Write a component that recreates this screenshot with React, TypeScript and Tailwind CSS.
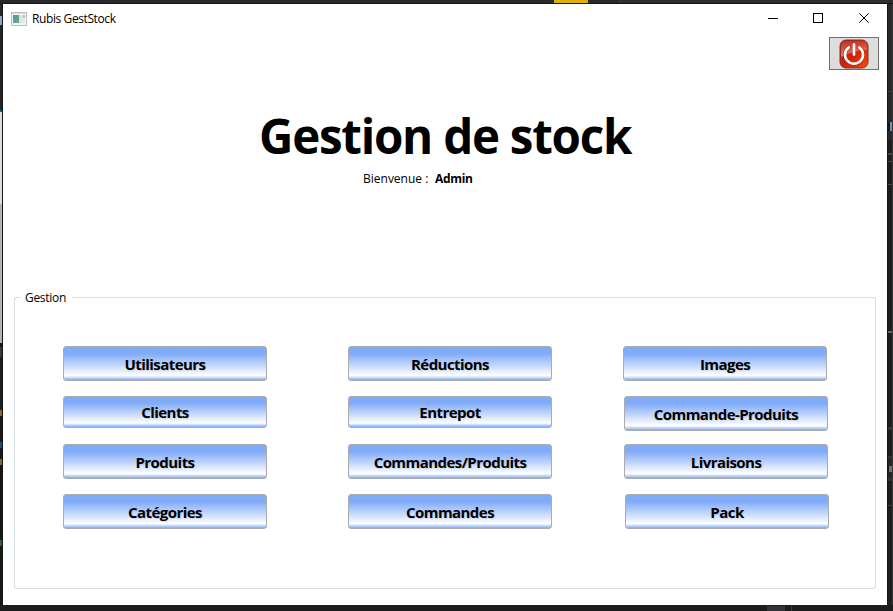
import React from "react";

type Mark = { h: number; c: string; x?: number };

const leftMarks: Mark[] = [
  { h: 12, c: "#28282a" },
  { h: 9, c: "#8fa3c8" },
  { h: 85, c: "#252526" },
  { h: 2, c: "#0a639c" },
  { h: 92, c: "#dedede" },
  { h: 139, c: "#b4b4b4" },
  { h: 4, c: "#151515" },
  { h: 10, c: "#3a3a3c" },
  { h: 53, c: "#1e1e1e" },
  { h: 6, c: "#8a6435" },
  { h: 26, c: "#1a1a1a" },
  { h: 6, c: "#234689" },
  { h: 11, c: "#1a1a1a" },
  { h: 6, c: "#8a6435" },
  { h: 75, c: "#171717" },
  { h: 6, c: "#2f632f" },
  { h: 59, c: "#181818" },
];

const rightMarks: Mark[] = [
  { h: 87, c: "#29292c" },
  { h: 1, c: "#3f3f44" },
  { h: 30, c: "#29292c" },
  { h: 9, c: "#5d9cc0", x: 2 },
  { h: 9, c: "#29292c" },
  { h: 13, c: "#1e1e1e" },
  { h: 2, c: "#5a4022" },
  { h: 6, c: "#1e1e1e" },
  { h: 1, c: "#4a4a4c" },
  { h: 22, c: "#1e1e1e" },
  { h: 1, c: "#4a4a4c" },
  { h: 146, c: "#1e1e1e" },
  { h: 2, c: "#6c6865" },
  { h: 94, c: "#1e1e1e" },
  { h: 3, c: "#333337" },
  { h: 26, c: "#1e1e1e" },
  { h: 3, c: "#333337" },
  { h: 7, c: "#252528" },
  { h: 6, c: "#77706c", x: 1 },
  { h: 5, c: "#252528" },
  { h: 4, c: "#333337" },
  { h: 24, c: "#1e1e1e" },
  { h: 1, c: "#3a3a3c" },
  { h: 99, c: "#1f1f20" },
];

function Strip({ marks, className }: { marks: Mark[]; className: string }) {
  return (
    <div className={`flex flex-col overflow-hidden ${className}`}>
      {marks.map((m, i) => (
        <div key={i} className="shrink-0" style={{ height: m.h, marginLeft: m.x ?? 0, backgroundColor: m.c }} />
      ))}
    </div>
  );
}

function MenuButton({ label, className = "h-[35px] pt-px" }: { label: string; className?: string }) {
  return (
    <button
      className={`flex w-[204px] shrink-0 items-center justify-center rounded-[3px] border border-[#a9abad] bg-[linear-gradient(to_bottom,#80abf8_0%,#80abf8_20%,#ffffff_87%,#80abf8_100%)] text-[15px] leading-5 font-bold tracking-[-0.55px] whitespace-nowrap text-black [text-shadow:1px_1px_1px_#00000018] ${className}`}
    >
      {label}
    </button>
  );
}

function AppIcon() {
  return (
    <svg width="16" height="14" viewBox="0 0 16 14" shapeRendering="crispEdges">
      <defs>
        <linearGradient id="pane" x1="0" y1="0" x2="1" y2="1">
          <stop offset="0" stopColor="#5b8ec0" />
          <stop offset="1" stopColor="#5fae78" />
        </linearGradient>
      </defs>
      <rect width="16" height="14" fill="#b9bec3" />
      <rect x="1" y="1" width="14" height="12" fill="#f1f3f5" />
      <rect x="1" y="1" width="14" height="1" fill="#d8dde2" />
      <rect x="2" y="3" width="6" height="8" fill="url(#pane)" />
      <rect x="8" y="3" width="4" height="8" fill="#dfe1e3" />
      <rect x="12" y="3" width="2" height="3" fill="#a9c9bb" />
      <rect x="12" y="6" width="2" height="5" fill="#e9eaeb" />
    </svg>
  );
}

function PowerIcon() {
  return (
    <svg width="30" height="30" viewBox="0 0 30 30">
      <defs>
        <linearGradient id="red" x1="0" y1="0" x2="1" y2="1">
          <stop offset="0" stopColor="#c01208" />
          <stop offset="0.5" stopColor="#d42005" />
          <stop offset="1" stopColor="#f65008" />
        </linearGradient>
        <linearGradient id="shine" x1="0" y1="0" x2="0" y2="1">
          <stop offset="0" stopColor="#fff" stopOpacity="0.1" />
          <stop offset="1" stopColor="#fff" stopOpacity="0.42" />
        </linearGradient>
      </defs>
      <rect x="1" y="1" width="28" height="28" rx="6" fill="url(#red)" stroke="#6b3a36" strokeWidth="1" />
      <path d="M2 7 Q2 2 7 2 H23 Q28 2 28 7 V11 Q16 11 2 18 Z" fill="url(#shine)" />
      <path d="M9.8 8.4 A9 9 0 1 0 20.2 8.4" fill="none" stroke="#7d1408" strokeOpacity="0.5" strokeWidth="3.8" strokeLinecap="round" />
      <path d="M15 5.5 V15.5" stroke="#7d1408" strokeOpacity="0.5" strokeWidth="4" strokeLinecap="round" />
      <path d="M9.8 8.4 A9 9 0 1 0 20.2 8.4" fill="none" stroke="#fff" strokeWidth="2.6" strokeLinecap="round" />
      <path d="M15 5.5 V15.5" stroke="#fff" strokeWidth="2.8" strokeLinecap="round" />
    </svg>
  );
}

export default function App() {
  return (
    <div className="flex h-[611px] w-[893px] flex-col overflow-hidden bg-[#1a1a1a] font-['Open_Sans','Noto_Sans',sans-serif] text-black">
      <div className="flex h-1 shrink-0 border-b border-[#151516] bg-[#29292b]">
        <div className="ml-[554px] w-[34px] bg-[#e0b000]" />
        <div className="ml-8 w-px bg-[#3c3c40]" />
        <div className="flex-1 bg-[#2d2d30]" />
      </div>
      <div className="flex h-[601px] shrink-0">
        <Strip marks={leftMarks} className="w-[3px] border-r border-[#141414]" />
        <main className="flex w-[884px] flex-col bg-white">
          <header className="flex h-[29px] shrink-0 items-center pl-2">
            <AppIcon />
            <h1 className="ml-[5px] text-[12px] leading-4 tracking-[-0.4px]">Rubis GestStock</h1>
            <svg className="ml-auto" width="136" height="29" viewBox="0 0 136 29" fill="none" stroke="#000" strokeWidth="1">
              <path d="M17 14.5 h10" shapeRendering="crispEdges" />
              <rect x="62.5" y="9.5" width="9" height="9" shapeRendering="crispEdges" />
              <path d="M108.3 9.3 l9.4 9.4 M117.7 9.3 l-9.4 9.4" />
            </svg>
          </header>
          <div className="flex h-[37px] shrink-0 justify-end pt-1 pr-2">
            <button className="flex h-[33px] w-[50px] items-center justify-center border border-[#707070] bg-[#dddddd]">
              <PowerIcon />
            </button>
          </div>
          <h2 className="mt-[33px] ml-[256px] h-[66px] shrink-0 text-[47.5px] leading-[66px] font-bold tracking-[-1.25px] whitespace-nowrap">
            Gestion de stock
          </h2>
          <p className="mt-0.5 ml-[360px] flex h-4 shrink-0 items-center text-[12px] leading-4 whitespace-nowrap">
            <span className="w-[72px]">Bienvenue :</span>
            <b className="tracking-[-0.3px]">Admin</b>
          </p>
          <fieldset className="mt-[102px] ml-[11px] flex h-[300px] w-[862px] shrink-0 flex-col">
            <div className="flex h-[18px] shrink-0 items-center">
              <div className="mt-[8px] h-[10px] w-[6px] self-start rounded-tl-[3px] border-t border-l border-[#d5dfe5]" />
              <legend className="w-[52px] pl-[5px] text-[12px] leading-4 tracking-[-0.3px]">Gestion</legend>
              <div className="mt-[8px] h-[10px] flex-1 self-start rounded-tr-[3px] border-t border-r border-[#d5dfe5]" />
            </div>
            <div className="flex h-[282px] items-start rounded-b-[3px] border-x border-b border-[#d5dfe5] pt-[39px] pl-12">
              <div className="flex w-[285px] flex-col">
                <MenuButton label="Utilisateurs" />
                <MenuButton label="Clients" className="mt-[15px] h-8" />
                <MenuButton label="Produits" className="mt-4 h-[35px] pt-px" />
                <MenuButton label="Catégories" className="mt-[15px] h-[35px] pt-px" />
              </div>
              <div className="flex w-[275px] flex-col">
                <MenuButton label="Réductions" />
                <MenuButton label="Entrepot" className="mt-[15px] h-8" />
                <MenuButton label="Commandes/Produits" className="mt-4 h-[35px] pt-px" />
                <MenuButton label="Commandes" className="mt-[15px] h-[35px] pt-px" />
              </div>
              <div className="flex flex-col">
                <MenuButton label="Images" />
                <MenuButton label="Commande-Produits" className="mt-[15px] ml-px h-[35px] pt-px" />
                <MenuButton label="Livraisons" className="mt-[13px] ml-px h-[35px] pt-px" />
                <MenuButton label="Pack" className="mt-[15px] ml-0.5 h-[35px] pt-px" />
              </div>
            </div>
          </fieldset>
        </main>
        <Strip marks={rightMarks} className="w-[6px] border-r border-l border-r-[#35353a] border-l-[#151515]" />
      </div>
      <div className="flex h-1.5 shrink-0 bg-[#1b1c1b] pt-px">
        <div className="ml-[767px] w-[18px] bg-[#333337]" />
        <div className="ml-1.5 w-px bg-[#3c3c40]" />
      </div>
    </div>
  );
}
